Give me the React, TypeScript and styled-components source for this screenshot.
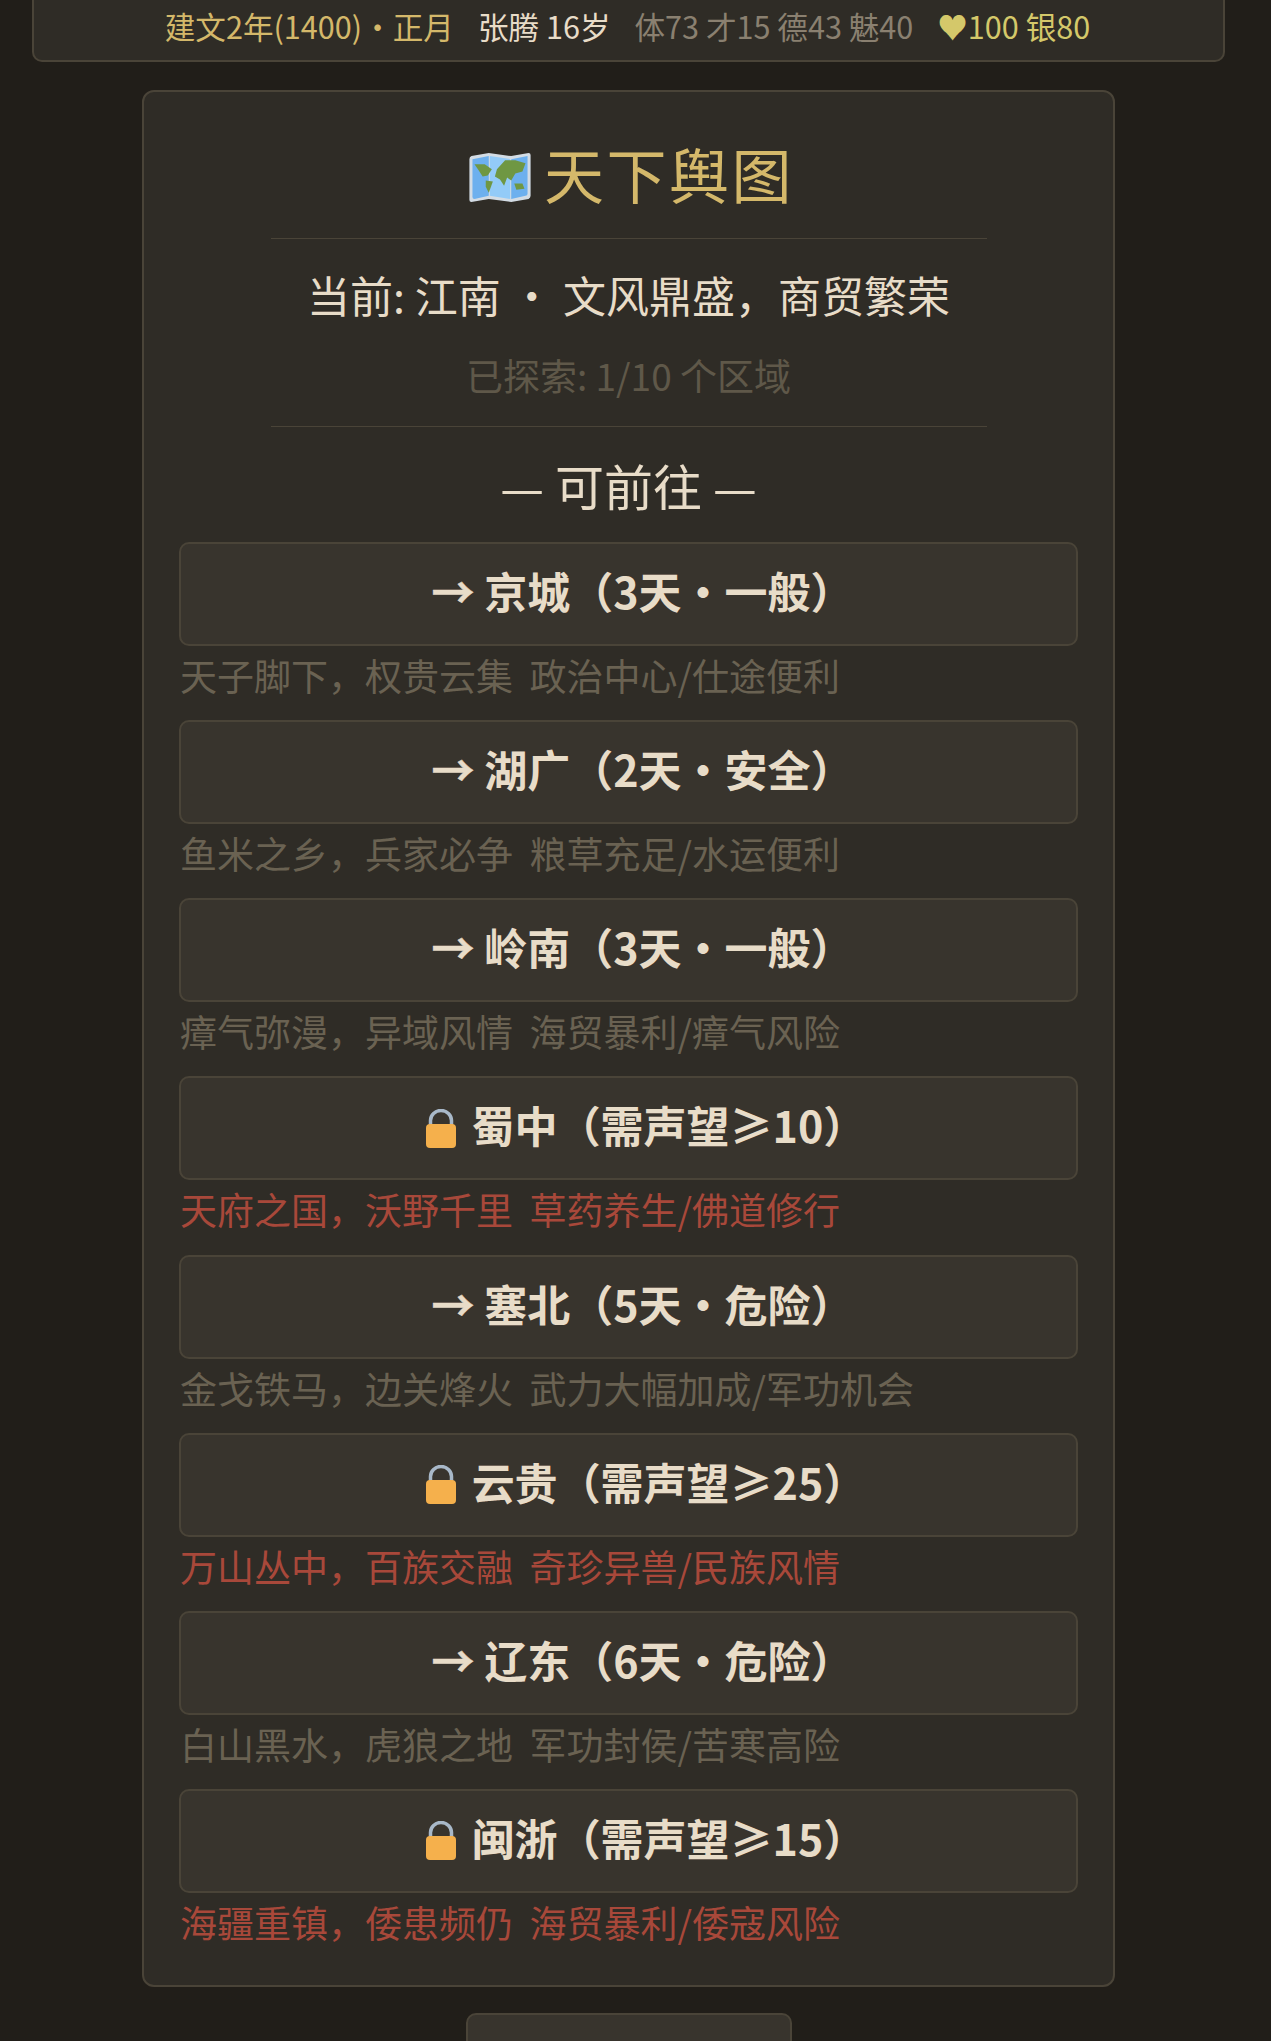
import React from "react";
import styled, { createGlobalStyle } from "styled-components";

type Region = {
  name: string;
  meta: string;
  hint: string;
  locked?: boolean;
};

const regions: Region[] = [
  { name: "京城", meta: "（3天・一般）", hint: "天子脚下，权贵云集  政治中心/仕途便利" },
  { name: "湖广", meta: "（2天・安全）", hint: "鱼米之乡，兵家必争  粮草充足/水运便利" },
  { name: "岭南", meta: "（3天・一般）", hint: "瘴气弥漫，异域风情  海贸暴利/瘴气风险" },
  { name: "蜀中", meta: "（需声望≥10）", hint: "天府之国，沃野千里  草药养生/佛道修行", locked: true },
  { name: "塞北", meta: "（5天・危险）", hint: "金戈铁马，边关烽火  武力大幅加成/军功机会" },
  { name: "云贵", meta: "（需声望≥25）", hint: "万山丛中，百族交融  奇珍异兽/民族风情", locked: true },
  { name: "辽东", meta: "（6天・危险）", hint: "白山黑水，虎狼之地  军功封侯/苦寒高险" },
  { name: "闽浙", meta: "（需声望≥15）", hint: "海疆重镇，倭患频仍  海贸暴利/倭寇风险", locked: true },
];

const MapIcon = () => (
  <MapSvg viewBox="0 0 62 50">
    <path
      d="M3 4 L20 1 L42 4 L59 1 Q61 1 61 3 L61 43 Q61 45 59 46 L42 49 L20 46 L3 49 Q1 49 1 47 L1 7 Q1 5 3 4 Z"
      fill="#d3dce4"
    />
    <path d="M4 7 L20 4 L20 43 L6 46 Q4 46 4 44 Z" fill="#6db0ee" />
    <path d="M21 4 L41 7 L41 46 L21 43 Z" fill="#93cbf8" />
    <path d="M42 7 L58 4 L58 41 Q58 43 56 43 L42 46 Z" fill="#6db0ee" />
    <path d="M6 12 L16 12 L23 17 L19 23 L14 24 L10 18 Z" fill="#6f9743" />
    <path d="M17 28 L24 29 L20 40 L17 34 Z" fill="#6f9743" />
    <path d="M28 17 L36 8 L46 8 L56 11 L53 19 L46 21 L42 28 L38 25 L35 33 L31 27 L26 24 Z" fill="#6f9743" />
    <path d="M45 31 L53 31 L55 36 L47 37 Z" fill="#6f9743" />
  </MapSvg>
);

const LockIcon = () => (
  <LockSvg viewBox="0 0 30 39">
    <path d="M4.5 16 V11.5 A10.5 10 0 0 1 25.5 11.5 V16" fill="none" stroke="#a8b8c8" strokeWidth="3.5" />
    <rect x="0" y="15" width="30" height="24" rx="4" fill="#f5b04c" />
  </LockSvg>
);

export default function App() {
  return (
    <Page>
      <GlobalStyle />
      <StatusBar>
        <DateText>建文2年(1400)・正月</DateText>
        <NameText>张腾 16岁</NameText>
        <StatsText>体73 才15 德43 魅40</StatsText>
        <WealthText>♥100 银80</WealthText>
      </StatusBar>
      <Panel>
        <Title>
          <MapIcon />
          天下舆图
        </Title>
        <Current>当前: 江南 ・ 文风鼎盛，商贸繁荣</Current>
        <Explored>已探索: 1/10 个区域</Explored>
        <SectionLabel>— 可前往 —</SectionLabel>
        <div>
          {regions.map((r) => (
            <div key={r.name}>
              <RegionButton>
                {r.locked ? <LockIcon /> : <Arrow>→ </Arrow>}
                {r.name}
                {r.meta}
              </RegionButton>
              <Hint $locked={r.locked}>{r.hint}</Hint>
            </div>
          ))}
        </div>
      </Panel>
      <BackButton>返回</BackButton>
    </Page>
  );
}

const GlobalStyle = createGlobalStyle`
  html, body {
    margin: 0;
    height: 2041px;
    overflow: hidden;
    background: #211e19;
  }
`;

const Page = styled.div`
  box-sizing: border-box;
  width: 1271px;
  height: 2041px;
  padding-right: 14px;
  background: #211e19;
  font-family: "Noto Sans CJK SC", "Noto Sans", sans-serif;
  display: flex;
  flex-direction: column;
  align-items: center;
  overflow: hidden;
`;

const StatusBar = styled.div`
  box-sizing: border-box;
  width: 1193px;
  height: 62px;
  padding: 0 2px 8px 0;
  flex: none;
  display: flex;
  justify-content: center;
  align-items: center;
  gap: 24px;
  font-size: 30.6px;
  background: #2f2c26;
  border: 2px solid #4a4438;
  border-top: none;
  border-radius: 0 0 10px 10px;
  margin-bottom: 28px;
`;

const DateText = styled.span`
  color: #d4b86a;
`;

const NameText = styled.span`
  color: #e8dcc8;
`;

const StatsText = styled.span`
  color: #8a8070;
`;

const WealthText = styled.span`
  color: #d4c86a;
`;

const Panel = styled.div`
  box-sizing: border-box;
  width: 973px;
  height: 1897px;
  flex: none;
  padding: 36px 35px 0;
  background: #2f2c26;
  border: 2px solid #4a4438;
  border-radius: 12px;
  text-align: center;
`;

const Title = styled.h2`
  box-sizing: border-box;
  margin: 0 auto;
  width: 716px;
  height: 111px;
  padding: 0 0 22px 5px;
  border-bottom: 1px solid #4a4438;
  display: flex;
  justify-content: center;
  align-items: center;
  gap: 12px;
  font-size: 60px;
  font-weight: 400;
  letter-spacing: 2.5px;
  color: #d4b86a;
`;

const MapSvg = styled.svg`
  width: 64px;
  height: 51px;
  margin-top: 10px;
`;

const Current = styled.div`
  font-size: 43px;
  color: #e8dcc8;
  margin-top: 24px;
`;

const Explored = styled.div`
  margin: 23px auto 0;
  width: 716px;
  height: 78px;
  border-bottom: 1px solid #4a4438;
  font-size: 37px;
  color: #5f5849;
`;

const SectionLabel = styled.div`
  font-size: 49px;
  color: #e8dcc8;
  margin: 22px 0 22px;
`;

const RegionButton = styled.div`
  box-sizing: border-box;
  height: 104px;
  padding: 0 0 8px 28px;
  display: flex;
  justify-content: center;
  align-items: center;
  font-size: 43px;
  font-weight: 700;
  color: #e8dcc8;
  white-space: pre;
  background: #38342d;
  border: 2px solid #4a4438;
  border-radius: 10px;
`;

const Arrow = styled.span`
  -webkit-text-stroke: 0.5px #e8dcc8;
`;

const LockSvg = styled.svg`
  width: 30px;
  height: 39px;
  margin: 8px 16px 0 7px;
`;

const Hint = styled.div<{ $locked?: boolean }>`
  height: 74.15px;
  padding: 3px 0 0 1px;
  box-sizing: border-box;
  font-size: 37px;
  line-height: 52px;
  text-align: left;
  white-space: pre;
  color: ${(p) => (p.$locked ? "#a8483a" : "#6a6252")};
`;

const BackButton = styled.div`
  box-sizing: border-box;
  flex: none;
  width: 326px;
  height: 100px;
  margin-top: 26px;
  text-align: center;
  font-size: 42px;
  line-height: 88px;
  color: #e8dcc8;
  background: #38342d;
  border: 2px solid #4a4438;
  border-radius: 10px;
`;
